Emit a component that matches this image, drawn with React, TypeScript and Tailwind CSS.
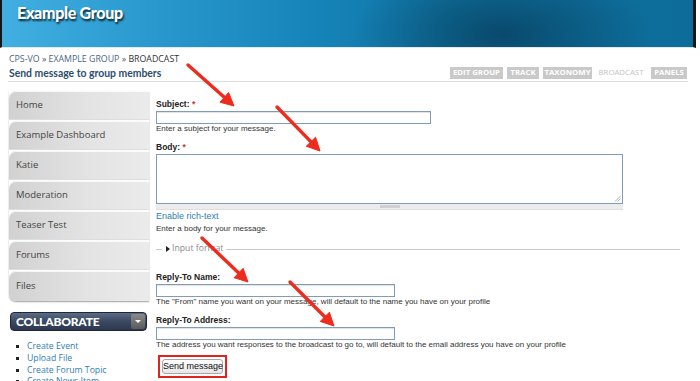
import React from "react";

function Arrow({ x1, y1, x2, y2 }: { x1: number; y1: number; x2: number; y2: number }) {
  const dx = x2 - x1;
  const dy = y2 - y1;
  const len = Math.hypot(dx, dy);
  const ux = dx / len;
  const uy = dy / len;
  const L = 13;
  const W = 6.5;
  const bx = x2 - ux * L;
  const by = y2 - uy * L;
  const px = -uy;
  const py = ux;
  const pts = `${x2},${y2} ${bx + px * W},${by + py * W} ${bx - px * W},${by - py * W}`;
  return (
    <g>
      <line x1={x1} y1={y1} x2={bx + ux * 3} y2={by + uy * 3} stroke="#ee2b1c" strokeWidth={3.4} strokeLinecap="round" />
      <polygon points={pts} fill="#ee2b1c" stroke="#ee2b1c" strokeWidth={1} strokeLinejoin="round" />
    </g>
  );
}

const navItems = ["Home", "Example Dashboard", "Katie", "Moderation", "Teaser Test", "Forums", "Files"];
const collab = ["Create Event", "Upload File", "Create Forum Topic", "Create News Item"];

function TextInput({ w }: { w: string }) {
  return <div className={`${w} h-[13px] border border-[#7f9cb9] bg-white shadow-[inset_0_1px_1px_rgba(0,0,0,0.12)]`} />;
}

export default function App() {
  return (
    <div className="relative w-[700px] h-[381px] overflow-hidden bg-white font-['Liberation_Sans',Arial,sans-serif] text-[#222]">
      {/* Header */}
      <header className="h-[48px] w-[696px] border-l-2 border-r-[3px] border-l-[#161616] border-r-[#161616] border-b border-b-[#e3e8ec] bg-[radial-gradient(ellipse_150px_70px_at_500px_34px,rgba(4,40,64,0.55),transparent),linear-gradient(90deg,#41afe1_0%,#2998cd_22%,#1684b9_45%,#0f73a2_65%,#0d6c99_100%)] pl-[15px] pt-[2px]">
        <h1 className="font-['Lato',sans-serif] font-black text-[16px] leading-[22px] text-white tracking-[-0.3px] [text-shadow:1px_2px_2px_rgba(0,0,0,0.8)]">
          Example Group
        </h1>
      </header>

      {/* Breadcrumb + title */}
      <div className="pl-[9px] pt-[6px]">
        <div className="font-['Open_Sans',sans-serif] text-[8.8px] leading-[11px] text-[#4a6785] uppercase whitespace-nowrap">
          CPS-VO <span className="text-[#555]">»</span> Example Group <span className="text-[#555]">»</span>{" "}
          <span className="text-[#333]">Broadcast</span>
        </div>
        <div className="flex items-center justify-between w-[680px] -ml-[1px] pl-[1px] h-[17px] border-b border-[#dcdcdc]">
          <div className="font-['Lato',sans-serif] font-bold text-[10.4px] leading-[14px] text-[#2c4d6e]">
            Send message to group members
          </div>
          <div className="flex items-center h-[12px] mr-[1px] font-['Open_Sans',sans-serif] font-bold text-[7.8px] uppercase text-white">
            <div className="w-[53px] h-[12px] bg-[#c9c9c9] flex items-center justify-center">Edit Group</div>
            <div className="w-[32px] h-[12px] bg-[#c9c9c9] ml-[4px] flex items-center justify-center">Track</div>
            <div className="w-[49px] h-[12px] bg-[#c9c9c9] ml-[4px] flex items-center justify-center">Taxonomy</div>
            <div className="w-[48px] h-[12px] ml-[5px] flex items-center justify-center font-normal text-[#c4c4c4]">Broadcast</div>
            <div className="w-[36px] h-[12px] bg-[#c9c9c9] ml-[6px] flex items-center justify-center">Panels</div>
          </div>
        </div>
      </div>

      {/* Body */}
      <div className="flex pl-[9px] mt-[9px]">
        <aside className="w-[140px] shrink-0">
          <nav className="flex flex-col gap-[2px] rounded-bl-[7px] shadow-[0_1px_2px_rgba(0,0,0,0.25)]">
            {navItems.map((n, i) => (
              <div
                key={n}
                className={`h-[28px] flex items-center pl-[7px] bg-[linear-gradient(90deg,#d1d1d1,#e3e3e3_55%,#ebebeb)] shadow-[inset_0_1px_0_rgba(255,255,255,0.8),0_1px_1px_rgba(0,0,0,0.15)] rounded-tl-[7px] ${i === navItems.length - 1 ? "rounded-bl-[7px] h-[30px]" : ""} font-['Open_Sans',sans-serif] text-[9.5px] text-[#444]`}
              >
                {n}
              </div>
            ))}
          </nav>

          <div className="mt-[11px] ml-[1px] w-[137px] h-[19px] rounded-[4px] border border-[#1f2735] bg-[linear-gradient(180deg,#5c6b86,#3a4861_50%,#2c384e)] flex items-center justify-between pl-[5px] pr-[1px]">
            <span className="font-['Lato',sans-serif] font-black text-[12px] text-white tracking-[-0.2px]">COLLABORATE</span>
            <span className="w-[14px] h-[15px] rounded-[2px] bg-[linear-gradient(180deg,#8a8a8a,#5a5a5a)] flex items-center justify-center">
              <span className="w-0 h-0 border-l-[3px] border-r-[3px] border-t-[3px] border-l-transparent border-r-transparent border-t-white" />
            </span>
          </div>

          <ul className="mt-[10px] pl-[7px]">
            {collab.map((c) => (
              <li key={c} className="flex items-center h-[11.7px]">
                <span className="w-[3px] h-[3px] bg-[#222] mr-[8px]" />
                <span className="font-['Open_Sans',sans-serif] text-[8.7px] text-[#2f7db3] leading-[11px] whitespace-nowrap">{c}</span>
              </li>
            ))}
          </ul>
        </aside>

        <main className="ml-[7px] flex-1 pt-[8px]">
          <label className="block text-[8.5px] leading-[11px] font-bold text-[#222]">
            Subject: <span className="text-[#c0392b]">*</span>
          </label>
          <div className="mt-[1px]">
            <TextInput w="w-[275px]" />
          </div>
          <div className="text-[8px] leading-[10px] text-[#333]">Enter a subject for your message.</div>

          <label className="block mt-[8px] text-[8.5px] leading-[11px] font-bold text-[#222]">
            Body: <span className="text-[#c0392b]">*</span>
          </label>
          <div className="mt-[1px] relative w-[467px] h-[50px] border border-[#7f9cb9] bg-white">
            <svg className="absolute right-[1px] bottom-[1px]" width="7" height="7" viewBox="0 0 7 7">
              <line x1="1" y1="6.5" x2="6.5" y2="1" stroke="#999" strokeWidth="0.8" />
              <line x1="3.5" y1="6.5" x2="6.5" y2="3.5" stroke="#999" strokeWidth="0.8" />
            </svg>
          </div>
          <div className="w-[467px] h-[6px] bg-[#ececec] border-b border-[#dedede] flex justify-center items-center">
            <div className="w-[20px] h-[3px] bg-[#cfcfcf]" />
          </div>
          <div className="mt-[1px] text-[9px] leading-[11px] text-[#2f7db3]">Enable rich-text</div>
          <div className="mt-[2px] text-[8px] leading-[10px] text-[#333]">Enter a body for your message.</div>

          <div className="mt-[8px] h-[14px] w-[524px] flex items-center">
            <div className="w-[6px] h-px bg-[#c8c8c8]" />
            <div className="ml-[4px] w-0 h-0 border-t-[3px] border-b-[3px] border-l-[4px] border-t-transparent border-b-transparent border-l-[#222]" />
            <span className="ml-[2px] font-['Open_Sans',sans-serif] text-[8.7px] text-[#8a8a8a]">Input format</span>
            <div className="ml-[3px] flex-1 h-px bg-[#c8c8c8]" />
          </div>

          <label className="block mt-[16px] text-[8.5px] leading-[11px] font-bold text-[#222]">Reply-To Name:</label>
          <div className="mt-[1px]">
            <TextInput w="w-[239px]" />
          </div>
          <div className="text-[8px] leading-[10px] text-[#333] whitespace-nowrap">
            The "From" name you want on your message, will default to the name you have on your profile
          </div>

          <label className="block mt-[8px] text-[8.5px] leading-[11px] font-bold text-[#222]">Reply-To Address:</label>
          <div className="mt-[1px]">
            <TextInput w="w-[239px]" />
          </div>
          <div className="text-[8px] leading-[10px] text-[#333] whitespace-nowrap">
            The address you want responses to the broadcast to go to, will default to the email address you have on your profile
          </div>

          <div className="mt-[5px] ml-[2px] inline-block border-2 border-[#e0241b] p-[2px]">
            <button className="block w-[61px] h-[15px] p-0 rounded-[3px] border border-[#a8a8a8] bg-[linear-gradient(180deg,#ffffff,#e6e6e6)] text-[9px] leading-[13px] text-[#111] text-center whitespace-nowrap">
              Send message
            </button>
          </div>
        </main>
      </div>

      {/* Red annotation arrows */}
      <svg className="absolute inset-0 pointer-events-none" width="700" height="381" viewBox="0 0 700 381">
        <Arrow x1={188} y1={65} x2={234} y2={106} />
        <Arrow x1={277} y1={107} x2={320} y2={151} />
        <Arrow x1={202} y1={238} x2={248} y2={282} />
        <Arrow x1={290} y1={282} x2={334} y2={326} />
      </svg>
    </div>
  );
}
